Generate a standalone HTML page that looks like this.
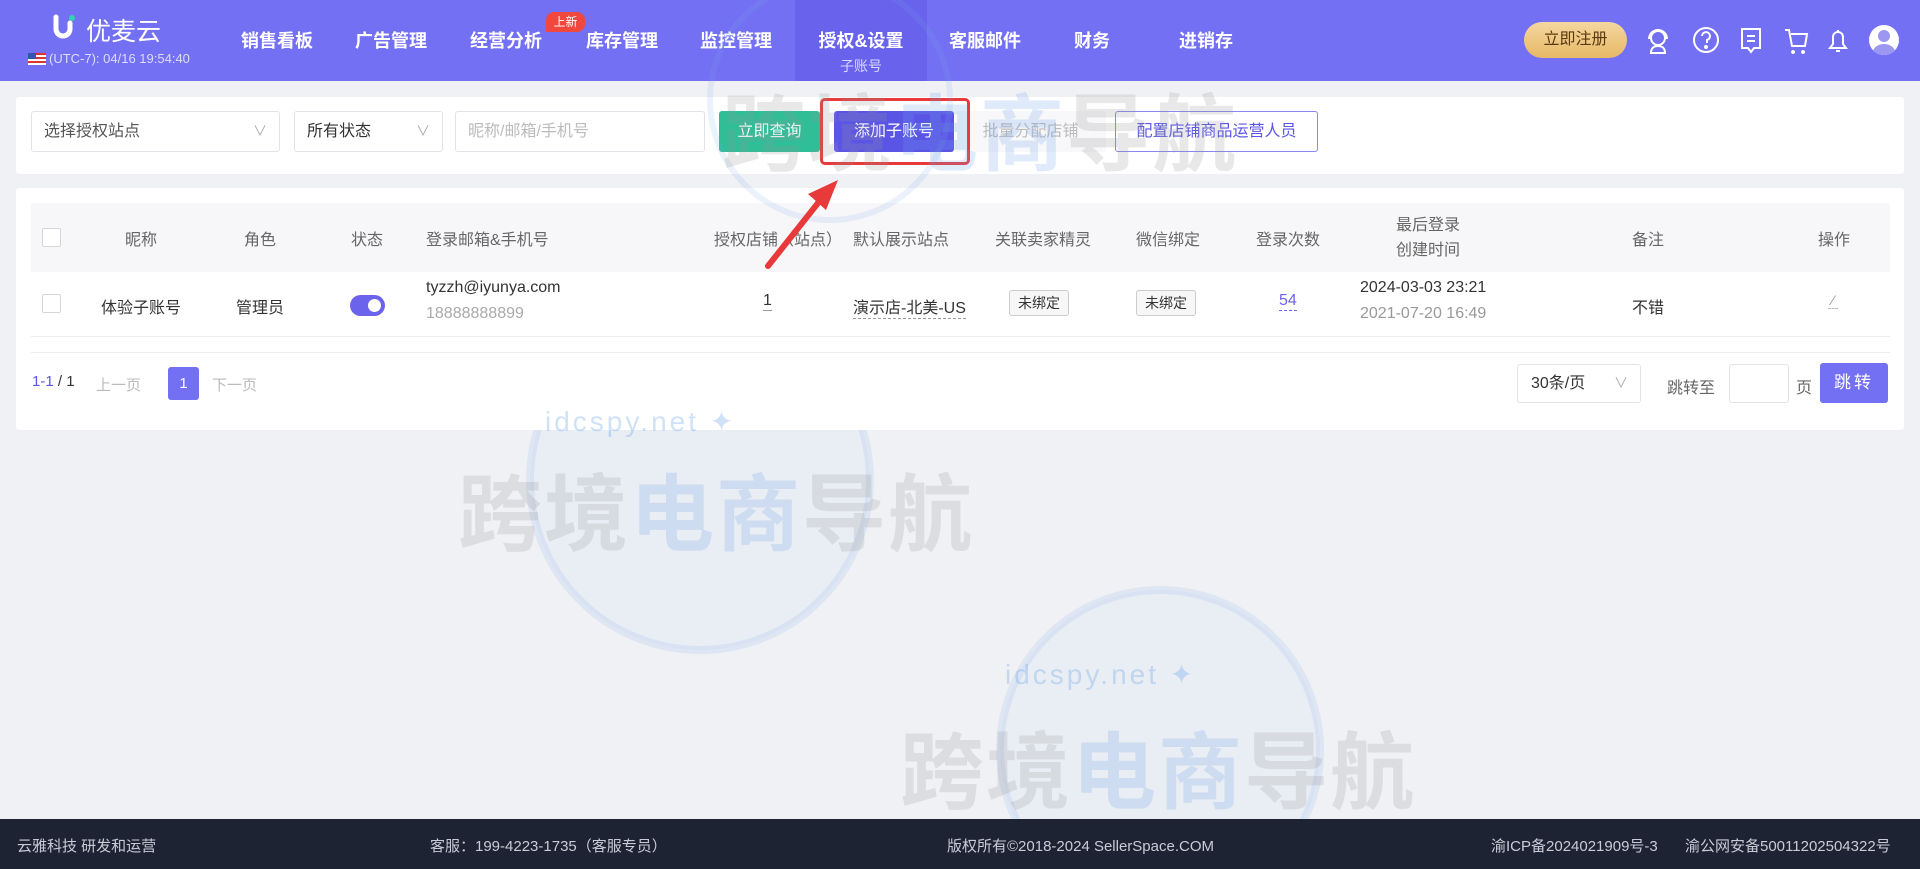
<!DOCTYPE html>
<html><head><meta charset="utf-8"><style>
*{margin:0;padding:0;box-sizing:border-box}
body{width:1920px;height:869px;overflow:hidden;background:#f0f1f5;font-family:"Liberation Sans","Noto Sans CJK SC",sans-serif;position:relative;color:#333}
.abs{position:absolute}
.hdr{left:0;top:0;width:1920px;height:81px;background:#7470f3}
.nav{top:27px;font-size:18px;font-weight:bold;color:#fff;transform:translateX(-50%);white-space:nowrap}
.card{background:#fff;border-radius:3px}
.sel{border:1px solid #e2e3e8;border-radius:3px;height:41px;top:111px;font-size:16px;line-height:39px;padding-left:12px;background:#fff}
.sel .ar{position:absolute;right:12px;top:0;color:#aaa;font-size:14px}
.btn{top:111px;height:41px;line-height:41px;text-align:center;font-size:16px;border-radius:3px;color:#fff}
.th{top:226px;font-size:16px;color:#666;transform:translateX(-50%);white-space:nowrap}
.td{font-size:16px;color:#333;white-space:nowrap}
.cb{width:19px;height:19px;border:1px solid #d5d6da;border-radius:2px;background:#fff}
.tag{border:1px solid #ccc;border-radius:3px;background:#f7f7f7;font-size:14px;padding:0 8px;height:26px;line-height:24px}
.wm{font-size:84px;color:rgba(150,150,150,0.22);font-weight:bold;letter-spacing:2px;white-space:nowrap;pointer-events:none}
.wm span{color:rgba(110,160,230,0.22)}
.ft{top:835px;font-size:15px;color:#c9ccd6;white-space:nowrap}
</style></head><body>
<svg class="abs" style="left:0;top:0" width="1920" height="869">
<circle cx="700" cy="480" r="170" fill="rgba(150,190,240,0.08)" stroke="rgba(120,170,235,0.15)" stroke-width="8"/>
<circle cx="1160" cy="750" r="160" fill="rgba(150,190,240,0.08)" stroke="rgba(120,170,235,0.15)" stroke-width="8"/>
</svg>

<div class="abs hdr"></div>
<div class="abs" style="left:795px;top:0;width:132px;height:81px;background:#6862ec"></div>
<svg class="abs" style="left:52px;top:14px" width="26" height="28"><path d="M4 3v12a7 7 0 0 0 14 0V9" stroke="#fff" stroke-width="5" fill="none" stroke-linecap="round"/><circle cx="20" cy="4" r="3" fill="#36d1b0"/></svg>
<div class="abs" style="left:86px;top:12px;font-size:25px;color:#fff">优麦云</div>
<div class="abs" style="left:28px;top:53px;width:18px;height:12px;background:repeating-linear-gradient(#d33 0 2px,#fff 2px 4px)"><div style="width:8px;height:6px;background:#35a"></div></div>
<div class="abs" style="left:49px;top:51px;font-size:13px;color:#dcdcfc">(UTC-7): 04/16 19:54:40</div>
<div class="abs nav" style="left:277px">销售看板</div>
<div class="abs nav" style="left:391px">广告管理</div>
<div class="abs nav" style="left:506px">经营分析</div>
<div class="abs" style="left:546px;top:12px;width:39px;height:20px;background:#f0473f;border-radius:8px 8px 8px 0;color:#fff;font-size:12px;text-align:center;line-height:20px">上新</div>
<div class="abs nav" style="left:622px">库存管理</div>
<div class="abs nav" style="left:736px">监控管理</div>
<div class="abs nav" style="left:861px">授权&amp;设置</div>
<div class="abs" style="left:861px;top:56px;transform:translateX(-50%);font-size:14px;color:#d8d8fa">子账号</div>
<div class="abs nav" style="left:985px">客服邮件</div>
<div class="abs nav" style="left:1092px">财务</div>
<div class="abs nav" style="left:1206px">进销存</div>
<div class="abs" style="left:1524px;top:22px;width:103px;height:36px;border-radius:18px;background:linear-gradient(#f4d7a0,#e7b866);color:#5a3a10;font-size:16px;text-align:center;line-height:36px">立即注册</div>
<svg class="abs" style="left:1644px;top:26px" width="260" height="30" fill="none" stroke="#fff" stroke-width="2">
<circle cx="14" cy="12" r="7"/><path d="M5 13a9 9 0 0 1 18 0M7 27c0-5 3-7 7-7s7 2 7 7z"/>
<circle cx="62" cy="14" r="12"/><path d="M58 10a4 4 0 1 1 5 4v3"/><circle cx="62" cy="21" r="1" fill="#fff"/>
<path d="M98 3h18v19h-6l-3 4-3-4h-6zM103 10h8M103 15h8"/>
<path d="M141 4h4l3 16h13l2-12h-16M149 25a1 1 0 1 0 .1 0M159 25a1 1 0 1 0 .1 0"/>
<path d="M186 22h16l-3-4v-7a5 5 0 0 0-10 0v7zM192 25h4M194 4v2"/>
</svg>
<div class="abs" style="left:1869px;top:25px;width:30px;height:30px;border-radius:50%;background:#fff;overflow:hidden"><div style="position:absolute;left:9px;top:5px;width:12px;height:12px;border-radius:50%;background:#9c98f2"></div><div style="position:absolute;left:4px;top:19px;width:22px;height:16px;border-radius:50%;background:#9c98f2"></div></div>

<div class="abs card" style="left:16px;top:97px;width:1888px;height:77px"></div>
<div class="abs sel" style="left:31px;width:249px;color:#555">选择授权站点<span class="ar">∨</span></div>
<div class="abs sel" style="left:294px;width:149px;color:#333">所有状态<span class="ar">∨</span></div>
<div class="abs sel" style="left:455px;width:250px;color:#bbb">昵称/邮箱/手机号</div>
<div class="abs btn" style="left:719px;width:101px;background:#2fbe98">立即查询</div>
<div class="abs btn" style="left:834px;width:120px;background:#5b55e6">添加子账号</div>
<div class="abs btn" style="left:955px;width:151px;background:#f8f8fa;color:#bbb">批量分配店铺</div>
<div class="abs btn" style="left:1115px;width:203px;border:1px solid #8a86ee;color:#5b55e6;background:#fff;line-height:39px">配置店铺商品运营人员</div>
<div class="abs" style="left:820px;top:98px;width:150px;height:67px;border:3px solid #e8393b;border-radius:5px"></div>

<div class="abs card" style="left:16px;top:188px;width:1888px;height:242px"></div>
<div class="abs" style="left:31px;top:203px;width:1859px;height:69px;background:#f7f7f9"></div>
<div class="abs" style="left:31px;top:336px;width:1859px;height:1px;background:#ebecef"></div>
<div class="abs" style="left:31px;top:352px;width:1859px;height:1px;background:#ebecef"></div>
<div class="abs cb" style="left:42px;top:228px"></div>
<div class="abs th" style="left:141px">昵称</div>
<div class="abs th" style="left:260px">角色</div>
<div class="abs th" style="left:367px">状态</div>
<div class="abs th" style="left:426px;transform:none">登录邮箱&amp;手机号</div>
<div class="abs th" style="left:778px">授权店铺（站点）</div>
<div class="abs th" style="left:853px;transform:none">默认展示站点</div>
<div class="abs th" style="left:1043px">关联卖家精灵</div>
<div class="abs th" style="left:1168px">微信绑定</div>
<div class="abs th" style="left:1288px">登录次数</div>
<div class="abs th" style="left:1428px;top:213px;text-align:center;line-height:25px">最后登录<br>创建时间</div>
<div class="abs th" style="left:1648px">备注</div>
<div class="abs th" style="left:1834px">操作</div>

<div class="abs cb" style="left:42px;top:294px"></div>
<div class="abs td" style="left:141px;top:294px;transform:translateX(-50%)">体验子账号</div>
<div class="abs td" style="left:260px;top:294px;transform:translateX(-50%)">管理员</div>
<div class="abs" style="left:350px;top:295px;width:35px;height:21px;border-radius:11px;background:#6c63ec"><div style="position:absolute;right:4px;top:4px;width:13px;height:13px;border-radius:50%;background:#fff"></div></div>
<div class="abs td" style="left:426px;top:279px">tyzzh@iyunya.com</div>
<div class="abs td" style="left:426px;top:305px;color:#aaa">18888888899</div>
<div class="abs td" style="left:763px;top:292px;border-bottom:1px solid #999">1</div>
<div class="abs td" style="left:853px;top:294px;border-bottom:1px dashed #999">演示店-北美-US</div>
<div class="abs tag" style="left:1009px;top:290px">未绑定</div>
<div class="abs tag" style="left:1136px;top:290px">未绑定</div>
<div class="abs td" style="left:1279px;top:292px;color:#6c63ec;border-bottom:1px dashed #6c63ec">54</div>
<div class="abs td" style="left:1360px;top:279px">2024-03-03 23:21</div>
<div class="abs td" style="left:1360px;top:305px;color:#999">2021-07-20 16:49</div>
<div class="abs td" style="left:1648px;top:294px;transform:translateX(-50%)">不错</div>
<div class="abs td" style="left:1828px;top:292px;color:#999;border-bottom:1px dashed #bbb;font-size:14px">&nbsp;⁄&nbsp;</div>

<div class="abs td" style="left:32px;top:373px;font-size:15px;color:#5b55e6">1-1 <span style="color:#333">/ 1</span></div>
<div class="abs td" style="left:96px;top:374px;font-size:15px;color:#bbb">上一页</div>
<div class="abs" style="left:168px;top:367px;width:31px;height:33px;background:#7470f3;border-radius:3px;color:#fff;text-align:center;line-height:33px;font-size:15px">1</div>
<div class="abs td" style="left:212px;top:374px;font-size:15px;color:#bbb">下一页</div>
<div class="abs" style="left:1517px;top:364px;width:124px;height:39px;border:1px solid #e2e3e8;border-radius:3px;font-size:16px;line-height:37px;padding-left:13px">30条/页<span style="position:absolute;right:12px;color:#aaa;font-size:14px">∨</span></div>
<div class="abs td" style="left:1667px;top:374px;color:#666">跳转至</div>
<div class="abs" style="left:1729px;top:364px;width:60px;height:39px;border:1px solid #e2e3e8;border-radius:3px"></div>
<div class="abs td" style="left:1796px;top:374px;color:#666">页</div>
<div class="abs" style="left:1820px;top:363px;width:68px;height:40px;background:#7470f3;border-radius:3px;color:#fff;text-align:center;line-height:40px;font-size:17px;letter-spacing:3px">跳转</div>

<!-- watermarks overlay -->
<svg class="abs" style="left:0;top:0" width="1920" height="869">
<circle cx="830" cy="100" r="120" fill="none" stroke="rgba(120,170,235,0.15)" stroke-width="6"/>
</svg>
<div class="abs wm" style="left:722px;top:68px">跨境<span>电商</span>导航</div>
<div class="abs wm" style="left:458px;top:448px">跨境<span>电商</span>导航</div>
<div class="abs wm" style="left:900px;top:706px">跨境<span>电商</span>导航</div>
<div class="abs" style="left:545px;top:405px;font-size:28px;color:rgba(100,160,230,0.3);letter-spacing:3px">idcspy.net ✦</div>
<div class="abs" style="left:1005px;top:658px;font-size:28px;color:rgba(100,160,230,0.3);letter-spacing:3px">idcspy.net ✦</div>

<svg class="abs" style="left:0;top:0" width="1920" height="869"><path d="M768 266 L822 198" stroke="#e8393b" stroke-width="6" stroke-linecap="round"/><path d="M838 180 L808 194 L826 210 Z" fill="#e8393b"/></svg>

<div class="abs" style="left:0;top:819px;width:1920px;height:50px;background:#1d2333"></div>
<div class="abs ft" style="left:17px">云雅科技 研发和运营</div>
<div class="abs ft" style="left:430px">客服：199-4223-1735（客服专员）</div>
<div class="abs ft" style="left:947px">版权所有©2018-2024 SellerSpace.COM</div>
<div class="abs ft" style="left:1491px">渝ICP备2024021909号-3</div>
<div class="abs ft" style="left:1685px">渝公网安备50011202504322号</div>
</body></html>
